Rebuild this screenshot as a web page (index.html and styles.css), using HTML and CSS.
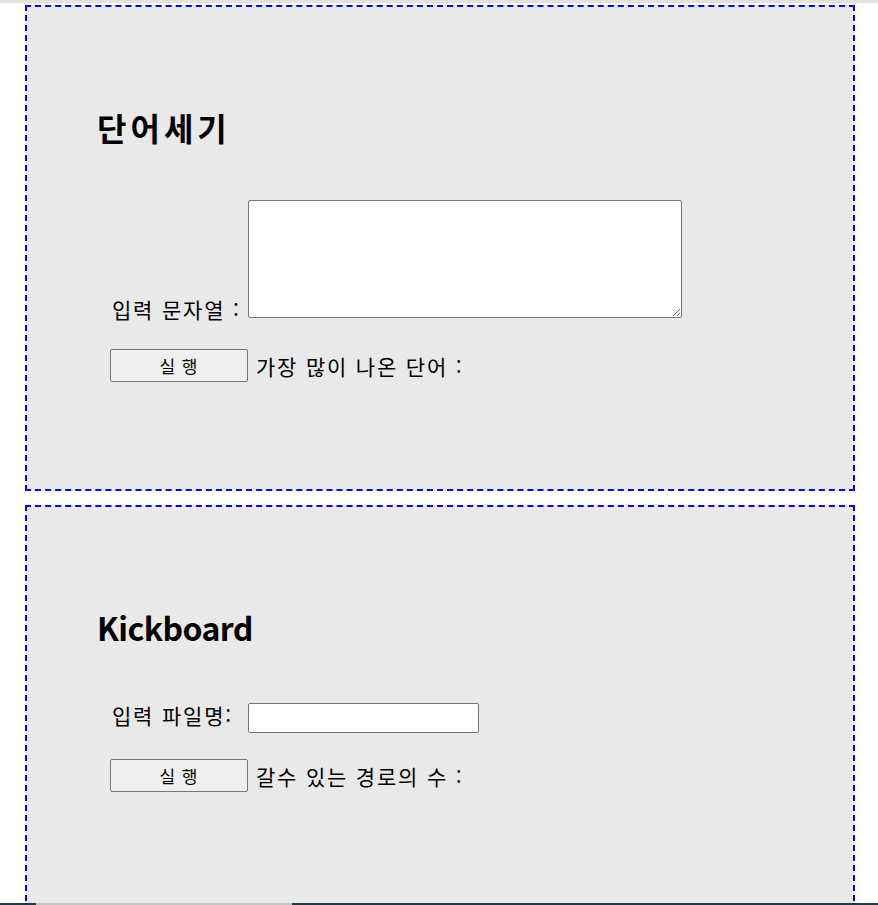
FILE: index.html
```html
<!DOCTYPE html>
<html lang="ko">
<head>
<meta charset="utf-8">
<title>단어세기 / Kickboard</title>
<link rel="stylesheet" href="styles.css">
</head>
<body>
<div class="topline"></div>
<main class="page">
  <section class="box">
    <h1 class="title title-ko">단어세기</h1>
    <div class="row row-input">
      <label class="label" for="words">입력 문자열 :</label><textarea id="words" class="area"></textarea>
    </div>
    <div class="row row-run">
      <button class="btn" type="button">실 행</button>
      <span class="result">가장 많이 나온 단어 :</span>
    </div>
  </section>
  <section class="box">
    <h1 class="title title-en">Kickboard</h1>
    <div class="row row-file">
      <label class="label label-file" for="file">입력 파일명:</label><input id="file" class="field" type="text">
    </div>
    <div class="row row-run row-run-file">
      <button class="btn" type="button">실 행</button>
      <span class="result">갈수 있는 경로의 수 :</span>
    </div>
  </section>
</main>
<div class="taskbar"><span class="tb-dark tb-left"></span><span class="tb-light"></span><span class="tb-dark tb-right"></span></div>
</body>
</html>
```
FILE: styles.css
```css
html, body {
  margin: 0;
  padding: 0;
  background: #ffffff;
  font-family: "Noto Sans CJK KR", "Noto Sans", sans-serif;
  color: #000;
}
.topline {
  height: 3px;
  background: #e1e1e1;
}
.page {
  padding: 2px 23px 0 25px;
  display: flex;
  flex-direction: column;
  gap: 14px;
}
.box {
  border: 2px dashed #0000ff;
  background: #e9e9e9;
  height: 482px;
  padding: 0 70px;
  box-sizing: content-box;
}
.title {
  font-size: 32px;
  font-weight: 700;
  line-height: 40px;
  margin: 100px 0 0 0;
}
.title-ko {
  letter-spacing: 4px;
}
.title-en {
  letter-spacing: -0.6px;
}
.row {
  margin-left: 15px;
  font-size: 21px;
  line-height: 24px;
  letter-spacing: 1.8px;
}
.row-input {
  margin-top: 53px;
}
.row-file {
  margin-top: 56px;
}
.label {
  display: inline-block;
  width: 136px;
}
.label-file {
  width: 136px;
}
.area {
  box-sizing: border-box;
  width: 434px;
  height: 118px;
  border: 1px solid #767676;
  border-radius: 2px;
  background: #fff;
  vertical-align: baseline;
  margin: 0;
}
.field {
  box-sizing: border-box;
  width: 231px;
  height: 30px;
  border: 1px solid #767676;
  border-radius: 2px;
  background: #fff;
  margin: 0;
  vertical-align: middle;
}
.row-run {
  margin-top: 28px;
  display: flex;
  align-items: center;
  margin-left: 13px;
}
.row-run-file {
  margin-top: 26px;
}
.btn {
  box-sizing: border-box;
  width: 138px;
  height: 33px;
  border: 1px solid #767676;
  border-radius: 2px;
  background: #efefef;
  font-family: "Noto Sans CJK KR", "Noto Sans", sans-serif;
  font-size: 17px;
  letter-spacing: 1px;
  padding: 0;
  color: #000;
}
.result {
  margin-left: 8px;
}
.taskbar {
  position: fixed;
  left: 0;
  right: 0;
  bottom: 0;
  height: 2px;
  display: flex;
}
.tb-dark { background: #253a45; }
.tb-left { width: 36px; }
.tb-light { width: 256px; background: #c4c4c4; }
.tb-right { flex: 1; }
```
